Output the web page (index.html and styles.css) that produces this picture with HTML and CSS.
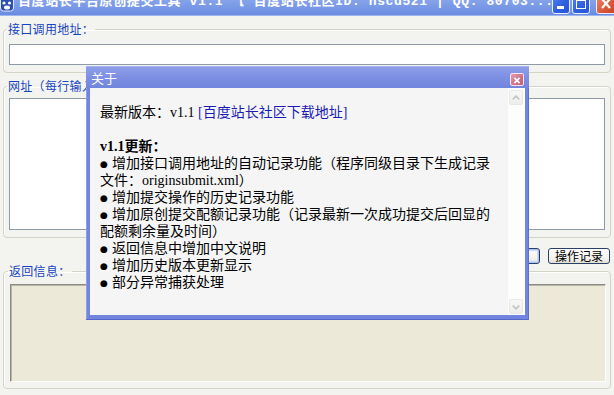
FILE: index.html
```html
<!DOCTYPE html>
<html lang="zh-CN">
<head>
<meta charset="utf-8">
<title>百度站长平台原创提交工具</title>
<link rel="stylesheet" href="styles.css">
</head>
<body>
<div class="win">
  <div class="titlebar">
    <svg class="appicon" width="14" height="12" viewBox="0 0 14 12">
      <rect x="0.5" y="-3" width="13" height="14" rx="3" fill="#2b4fae" stroke="#dfe8ff" stroke-width="1"/>
      <circle cx="4" cy="3" r="1.6" fill="#fff"/>
      <circle cx="9.5" cy="3" r="1.6" fill="#fff"/>
      <ellipse cx="7" cy="7.5" rx="3" ry="2" fill="#fff"/>
    </svg>
    <span class="title">百度站长平台原创提交工具 v1.1 【 百度站长社区ID: hscd521 | QQ: 80703...</span>
    <div class="tbtns">
      <span class="tb">
        <svg width="16" height="19" viewBox="0 0 16 19"><rect x="4" y="12" width="7" height="3" fill="#fff"/></svg>
      </span>
      <span class="tb">
        <svg width="16" height="19" viewBox="0 0 16 19"><rect x="3.5" y="5.5" width="9" height="9" fill="none" stroke="#fff" stroke-width="1"/><rect x="3" y="5" width="10" height="2" fill="#fff"/></svg>
      </span>
      <span class="tb close">
        <svg width="19" height="19" viewBox="0 0 19 19"><path d="M5 5 L13 14 M13 5 L5 14" stroke="#fff" stroke-width="2.2"/></svg>
      </span>
    </div>
  </div>

  <div class="client">
    <fieldset class="group g1">
      <legend>接口调用地址：</legend>
      <div class="input"></div>
    </fieldset>
    <fieldset class="group g2">
      <legend>网址（每行输入一个）：</legend>
      <div class="textarea"></div>
    </fieldset>
    <div class="btnrow">
      <button class="btn def">提交</button>
      <button class="btn">操作记录</button>
    </div>
    <fieldset class="group g3">
      <legend>返回信息：</legend>
      <div class="output"></div>
    </fieldset>
  </div>

  <div class="dialog">
    <div class="dlg-title">
      <span class="dlg-caption">关于</span>
      <span class="dlg-close">
        <svg width="14" height="13" viewBox="0 0 14 13"><path d="M4 3.5 L10 9.5 M10 3.5 L4 9.5" stroke="#fff" stroke-width="2"/></svg>
      </span>
    </div>
    <div class="dlg-body">
      <div class="dlg-text">
        <div class="line">最新版本：v1.1 <span class="link">[百度站长社区下载地址]</span></div>
        <div class="line">&nbsp;</div>
        <div class="line"><b>v1.1更新：</b></div>
        <div class="line"><span class="dot">●</span>增加接口调用地址的自动记录功能（程序同级目录下生成记录</div>
        <div class="line">文件：originsubmit.xml）</div>
        <div class="line"><span class="dot">●</span>增加提交操作的历史记录功能</div>
        <div class="line"><span class="dot">●</span>增加原创提交配额记录功能（记录最新一次成功提交后回显的</div>
        <div class="line">配额剩余量及时间）</div>
        <div class="line"><span class="dot">●</span>返回信息中增加中文说明</div>
        <div class="line"><span class="dot">●</span>增加历史版本更新显示</div>
        <div class="line"><span class="dot">●</span>部分异常捕获处理</div>
      </div>
      <div class="scrollbar">
        <span class="sbtn">
          <svg width="13" height="14" viewBox="0 0 13 14"><path d="M3 8.5 L6.5 5 L10 8.5" fill="none" stroke="#c4c4c4" stroke-width="1.6"/></svg>
        </span>
        <span class="sbtn">
          <svg width="13" height="14" viewBox="0 0 13 14"><path d="M3 5.5 L6.5 9 L10 5.5" fill="none" stroke="#c4c4c4" stroke-width="1.6"/></svg>
        </span>
      </div>
    </div>
  </div>
</div>
</body>
</html>
```

FILE: styles.css
```css
* { box-sizing: border-box; }
html, body { margin: 0; padding: 0; }
body {
  width: 614px;
  height: 395px;
  overflow: hidden;
  background: #f3f3ef;
  font-family: "Noto Sans CJK SC", sans-serif;
  font-size: 12px;
}
.win {
  position: relative;
  width: 614px;
  height: 395px;
  display: flex;
  flex-direction: column;
}

/* title bar */
.titlebar {
  flex: none;
  height: 16px;
  display: flex;
  align-items: flex-start;
  overflow: hidden;
  background: linear-gradient(#86a3ea, #7393e3 70%, #6a8ce0);
  border-bottom: 1px solid #9fb6ee;
}
.appicon { flex: none; margin: 0 4px 0 0; }
.title {
  flex: 1;
  min-width: 0;
  margin-top: -5px;
  color: #fff;
  font-weight: bold;
  font-size: 13px;
  line-height: 14px;
  letter-spacing: 0.6px;
  white-space: nowrap;
  overflow: hidden;
  font-family: "Liberation Mono", "Noto Sans CJK SC", monospace;
}
.tbtns {
  flex: none;
  display: flex;
  gap: 2px;
  margin-top: -7px;
  margin-right: -3px;
}
.tb {
  width: 18px;
  height: 21px;
  border: 1px solid #eaf0ff;
  border-radius: 3px;
  background: linear-gradient(135deg, #5a86f0, #2d5fe0 60%, #2457d8);
  display: flex;
}
.tb.close {
  width: 21px;
  margin-left: 4px;
  background: linear-gradient(135deg, #f08a6a, #d95838 60%, #c84428);
}

/* client area */
.client {
  flex: 1;
  display: flex;
  flex-direction: column;
  padding: 6px 3px 0 3px;
}
.group {
  margin: 0;
  min-width: 0;
  flex: none;
  border: 1px solid #d3d3c6;
  border-radius: 4px;
  box-shadow: inset 1px 1px 0 #fff;
}
.group legend {
  padding: 0 1px;
  margin-left: -2px;
  color: #1744c0;
  font-size: 12px;
  line-height: 14px;
  letter-spacing: 0.3px;
}
.group.g1 { padding: 8px 5px 7px 5px; }
.group.g2 { margin-top: 6px; padding: 5px 5px 7px 5px; }
.group.g3 { padding: 6px 4px 6px 6px; }

.input {
  height: 21px;
  background: #fff;
  border: 1px solid #8d9aa8;
}
.textarea {
  height: 132px;
  background: #fff;
  border: 1px solid #8d9aa8;
}
.output {
  height: 98px;
  background: #ece9d8;
  border-top: 1px solid #8b8a83;
  border-left: 1px solid #8b8a83;
  border-bottom: 1px solid #fbfbf8;
  border-right: 1px solid #fbfbf8;
  box-shadow: inset 1px 1px 0 #b9b7ac;
}

.btnrow {
  flex: none;
  margin-top: 10px;
  display: flex;
  justify-content: flex-end;
  gap: 8px;
  padding-right: 1px;
}
.btn {
  width: 62px;
  height: 16px;
  padding: 0;
  border: 1px solid #2c3f66;
  border-radius: 3px;
  background: linear-gradient(#ffffff, #f2f1ec 70%, #e0ded4);
  font-family: "Noto Sans CJK SC", sans-serif;
  font-size: 12px;
  line-height: 14px;
  color: #000;
}
.btn.def {
  box-shadow: inset 0 0 0 1px #a9c4f2, inset 0 0 0 2px #cddcf6;
}

/* about dialog */
.dialog {
  position: absolute;
  left: 86px;
  top: 66px;
  width: 443px;
  height: 254px;
  display: flex;
  flex-direction: column;
  padding: 0 4px 4px 4px;
  background: #7285de;
  border-bottom: 1px solid #5566cc;
  box-shadow: inset 1px 0 0 #8fa0ea, inset -1px 0 0 #5e70d4;
}
.dlg-title {
  flex: none;
  height: 22px;
  display: flex;
  align-items: flex-start;
  justify-content: space-between;
  background: linear-gradient(#8d9de8, #7d8fe3 50%, #7285de);
  margin: 0 -4px;
  padding: 0 5px 0 5px;
  border-top: 1px solid #a6b2ee;
}
.dlg-caption {
  margin-top: 3px;
  color: #fff;
  font-size: 13px;
  line-height: 16px;
}
.dlg-close {
  margin-top: 6px;
  width: 14px;
  height: 13px;
  display: flex;
  border: 1px solid #f4e6ee;
  border-radius: 2px;
  background: linear-gradient(135deg, #e8a0b0, #cf6d84 60%, #c25e76);
}
.dlg-body {
  flex: 1;
  display: flex;
  background: #f5f5f5;
}
.dlg-text {
  flex: 1;
  padding: 16px 0 0 10px;
  font-family: "Liberation Serif", "Noto Sans CJK SC", serif;
  font-size: 14px;
  line-height: 17px;
  color: #000;
  white-space: nowrap;
  overflow: hidden;
}
.line {
  height: 17px;
}
.link { color: #1b1bb5; }
.dot {
  display: inline-block;
  width: 12px;
  font-family: "DejaVu Sans", sans-serif;
  font-size: 9px;
  line-height: 10px;
  vertical-align: 1px;
}
.scrollbar {
  flex: none;
  width: 17px;
  display: flex;
  flex-direction: column;
  justify-content: space-between;
  padding: 2px 2px 1px 1px;
  background: #fdfdfd;
}
.sbtn {
  width: 14px;
  height: 15px;
  display: flex;
  align-items: center;
  justify-content: center;
  border: 1px solid #e8e8e4;
  border-radius: 2px;
  background: linear-gradient(#f8f8f6, #eeeeea);
}
```
